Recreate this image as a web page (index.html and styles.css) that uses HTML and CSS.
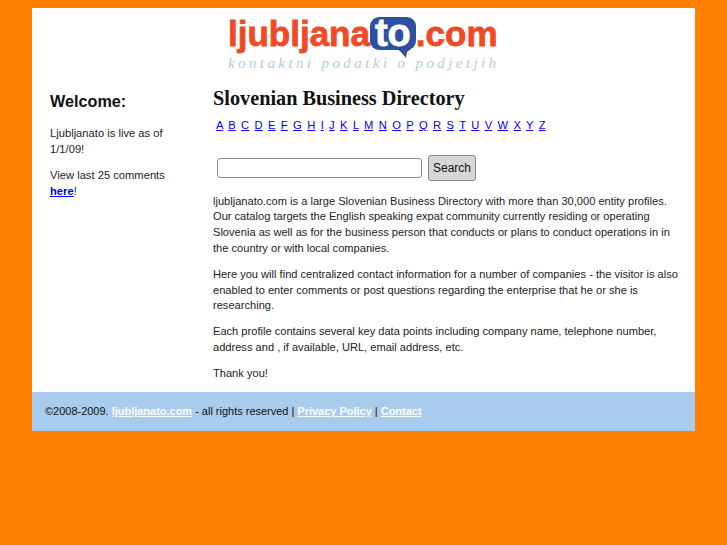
FILE: index.html

```html
<!DOCTYPE html>
<html lang="en">
<head>
  <meta charset="UTF-8">
  <title>Ljubljanato.com - Slovenian Business Directory</title>
  <link rel="stylesheet" href="styles.css">
</head>
<body>
  <div class="container">
    <div class="header">
      <div class="logo">
        <div class="logo-name">ljubljana<span class="logo-bubble">to<svg class="logo-tail" width="14" height="9" viewBox="0 0 14 9"><path d="M0 0H14L10 3L9 9L4 3Z" fill="#2f4f9f"/></svg></span>.com</div>
        <div class="logo-sub">kontaktni podatki o podjetjih</div>
      </div>
    </div>
    <div class="row">
      <div class="side">
        <h3>Welcome:</h3>
        <p>Ljubljanato is live as of 1/1/09!</p>
        <p>View last 25 comments <a href="#"><b>here</b></a>!</p>
      </div>
      <div class="main">
        <h1>Slovenian Business Directory</h1>
        <div class="letters">
          <a href="#">A</a> <a href="#">B</a> <a href="#">C</a> <a href="#">D</a> <a href="#">E</a> <a href="#">F</a> <a href="#">G</a> <a href="#">H</a> <a href="#">I</a> <a href="#">J</a> <a href="#">K</a> <a href="#">L</a> <a href="#">M</a> <a href="#">N</a> <a href="#">O</a> <a href="#">P</a> <a href="#">Q</a> <a href="#">R</a> <a href="#">S</a> <a href="#">T</a> <a href="#">U</a> <a href="#">V</a> <a href="#">W</a> <a href="#">X</a> <a href="#">Y</a> <a href="#">Z</a>
        </div>
        <form class="search">
          <input type="text">
          <button type="button">Search</button>
        </form>
        <p>ljubljanato.com is a large Slovenian Business Directory with more than 30,000 entity profiles. Our catalog targets the English speaking expat community currently residing or operating Slovenia as well as for the business person that conducts or plans to conduct operations in in the country or with local companies.</p>
        <p>Here you will find centralized contact information for a number of companies - the visitor is also enabled to enter comments or post questions regarding the enterprise that he or she is researching.</p>
        <p>Each profile contains several key data points including company name, telephone number, address and , if available, URL, email address, etc.</p>
        <p>Thank you!</p>
      </div>
    </div>
    <div class="footer">
      &copy;2008-2009. <a href="#">ljubljanato.com</a> - all rights reserved | <a href="#">Privacy Policy</a> | <a href="#">Contact</a>
    </div>
  </div>
</body>
</html>
```

FILE: styles.css

```css
body {
  background: #ff8000;
  font-family: "Liberation Sans", Arial, sans-serif;
  font-size: 11.2px;
  line-height: 1.4;
  color: #222;
  margin: 0;
  padding: 8px 0 0 32px;
}
.container {
  width: 663px;
  background: white;
}
.header {
  height: 72px;
  display: flex;
  justify-content: center;
}
.logo {
  width: 272px;
  margin-left: 1px;
}
.logo-name {
  display: flex;
  align-items: center;
  height: 47px;
  padding-top: 4px;
  box-sizing: border-box;
  font-size: 35px;
  font-weight: bold;
  -webkit-text-stroke: 0.8px #f04a24;
  color: #f04a24;
}
.logo-bubble {
  position: relative;
  background: #2f4f9f;
  color: white;
  -webkit-text-stroke: 0.8px white;
  font-size: 38px;
  border-radius: 9px;
  height: 33px;
  line-height: 33px;
  padding: 0 5px;
}
.logo-tail {
  position: absolute;
  right: 5px;
  top: 32px;
}
.logo-sub {
  font-family: "Liberation Serif", serif;
  font-style: italic;
  font-size: 15px;
  letter-spacing: 3.4px;
  line-height: 16px;
  color: #b4cbe3;
  white-space: nowrap;
}
.row {
  display: flex;
  height: 312px;
}
.side {
  width: 181px;
  padding-left: 18px;
  padding-right: 30px;
  box-sizing: border-box;
}
.side h3 {
  font-size: 16.2px;
  line-height: 20px;
  color: #111;
  margin: 11px 0 15px;
}
.side p {
  margin: 0 0 10.5px;
}
.main {
  width: 470px;
}
.main h1 {
  font-family: "Liberation Serif", serif;
  font-size: 20.25px;
  line-height: 22px;
  color: #111;
  margin: 7px 0 9px;
}
.letters {
  padding-left: 3px;
  word-spacing: 2.26px;
  margin-bottom: 21px;
}
.search {
  display: flex;
  align-items: center;
  gap: 6px;
  padding-left: 4px;
  margin-bottom: 13px;
}
.search input {
  width: 205px;
  height: 20px;
  padding: 0 2px;
  box-sizing: border-box;
  border: 1px solid #8a8a8a;
  border-radius: 3px;
  background: white;
}
.search button {
  width: 48px;
  height: 26px;
  padding: 0;
  font-family: inherit;
  font-size: 12px;
  color: #111;
  background: #d6d6d6;
  border: 1px solid #8a8a8a;
  border-radius: 3px;
}
.main p {
  font-size: 11.1px;
  line-height: 15.68px;
  margin: 0 0 10.5px;
}
a {
  color: #0000ee;
}
.footer {
  background: #a9cbee;
  height: 39px;
  line-height: 38px;
  padding-left: 13px;
  font-size: 10.97px;
  color: #111;
}
.footer a {
  color: white;
  font-weight: bold;
}
```
